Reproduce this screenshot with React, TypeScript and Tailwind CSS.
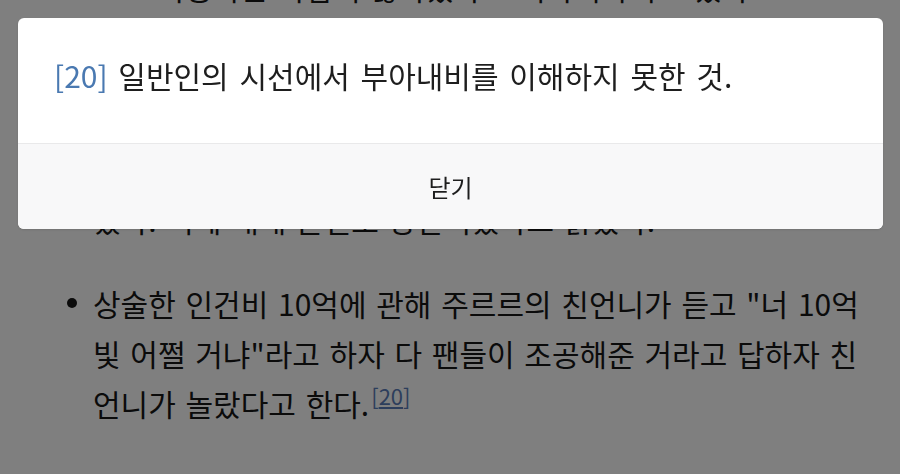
import React from 'react';

const font = { fontFamily: '"Noto Sans CJK KR", "Noto Sans", sans-serif' };

const hiddenLines = [
  '방송에서 부아내비라는 말을 처음 사용했을 때 많은',
  '시청자들이 무슨 뜻인지 몰라 채팅창에 질문이 쏟',
  '아졌고, 이후 팬들 사이에서 유행어처럼 쓰이게 되',
  '었다. 이에 대해 본인도 장난이었다고 밝혔다.',
];

const Bullet: React.FC = () => (
  <span className="w-[93px] shrink-0 flex justify-end pr-[16px] pt-[20px]">
    <span className="w-[10px] h-[10px] rounded-full bg-[#161616]" />
  </span>
);

const App: React.FC = () => {
  return (
    <div className="min-h-screen bg-white text-[#161616] overflow-hidden" style={font}>
      {/* page content behind the footnote dialog */}
      <ul className="text-[30px] leading-[50px] [word-spacing:3px] pr-[25px]">
        <li className="flex -mt-[38px]">
          <span className="w-[93px] shrink-0" />
          <span className="whitespace-nowrap">으로 사용하는 사람이 많아졌다고 이야기하기도 했다.</span>
        </li>
        <li className="flex mt-[32px]">
          <Bullet />
          <span className="whitespace-nowrap">
            {hiddenLines.map((l) => (
              <span key={l} className="block">{l}</span>
            ))}
          </span>
        </li>
        <li className="flex mt-[34px]">
          <Bullet />
          <span>
            상술한 인건비 10억에 관해 주르르의 친언니가 듣고 "너 10억 빛 어쩔 거냐"라고 하자 다
            팬들이 조공해준 거라고 답하자 친언니가 놀랐다고 한다.
            <sup className="text-[22px] text-[#5a7cb8] [word-spacing:0] ml-[2px]">
              [<span className="underline decoration-2 underline-offset-2">20</span>]
            </sup>
          </span>
        </li>
      </ul>

      {/* modal overlay */}
      <div className="fixed inset-0 bg-black/50 pl-[18px] pr-[17px] pt-[18px]">
        <div className="bg-white rounded-[6px] overflow-hidden shadow-sm">
          <div className="pl-[36px] pr-6 pt-[36px] pb-[47px] text-[30px] leading-[42px] text-[#1e1e1e] [word-spacing:4px]">
            <span className="text-[#4a79b1]">[20]</span> 일반인의 시선에서 부아내비를 이해하지 못한 것.
          </div>
          <button className="w-full h-[86px] border-t border-[#e9e9ea] bg-[#f8f8f9] flex items-center justify-center text-[24px] text-[#1e1e1e]">
            닫기
          </button>
        </div>
      </div>
    </div>
  );
};

export default App;
